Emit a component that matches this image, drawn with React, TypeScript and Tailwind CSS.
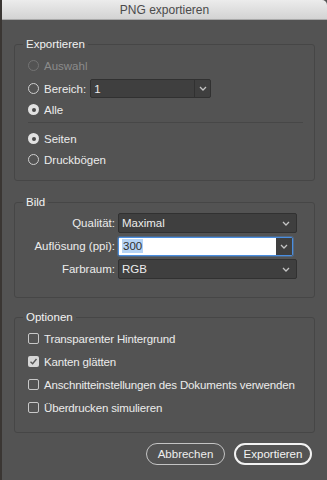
import React from 'react';

const font = "font-['Liberation_Sans',Arial,sans-serif]";

function Chevron() {
  return (
    <svg width="8" height="5" viewBox="0 0 8 5" className="shrink-0">
      <polyline points="1,1 4,4 7,1" fill="none" stroke="#c4c4c4" strokeWidth="1.3" />
    </svg>
  );
}

function Radio({ checked, disabled, label }: { checked?: boolean; disabled?: boolean; label: string }) {
  return (
    <div className="flex items-center h-[21px]">
      {checked ? (
        <span className="w-[11px] h-[11px] rounded-full bg-[#e2e2e2] flex items-center justify-center">
          <span className="w-[4px] h-[4px] rounded-full bg-[#4a4a4a]" />
        </span>
      ) : (
        <span
          className={
            'w-[11px] h-[11px] rounded-full border ' +
            (disabled ? 'border-[#747474]' : 'border-[#cfcfcf]')
          }
        />
      )}
      <span className={'ml-[5px] ' + (disabled ? 'text-[#8b8b8b]' : 'text-[#ececec]')}>{label}</span>
    </div>
  );
}

function Checkbox({ checked, label }: { checked?: boolean; label: string }) {
  return (
    <div className="flex items-center h-[23px] whitespace-nowrap">
      {checked ? (
        <span className="w-[11px] h-[11px] shrink-0 rounded-[2px] bg-[#d6d6d6] flex items-center justify-center">
          <svg width="9" height="9" viewBox="0 0 9 9">
            <polyline points="1.5,4.8 3.6,6.8 7.5,2" fill="none" stroke="#555" strokeWidth="1.4" />
          </svg>
        </span>
      ) : (
        <span className="w-[11px] h-[11px] shrink-0 rounded-[2px] border border-[#c8c8c8]" />
      )}
      <span className="ml-[5px] text-[#ececec] tracking-[-0.15px]">{label}</span>
    </div>
  );
}

function Select({ value }: { value: string }) {
  return (
    <div className="w-[179px] h-[20px] bg-[#3f3f3f] border border-[#313131] rounded-[2px] flex items-center justify-between pl-[3px] pr-[6px] text-[#ececec]">
      <span>{value}</span>
      <Chevron />
    </div>
  );
}

export default function App() {
  return (
    <div className={`w-[327px] h-[480px] bg-[#3a3633] ${font} text-[11.5px] leading-[14px] select-none`}>
      <div className="ml-[2px] h-full bg-[#535353] flex flex-col">
        {/* Title bar */}
        <div className="h-[20px] rounded-tr-[5px] bg-gradient-to-b from-[#ececec] to-[#d3d3d3] border-b border-[#a9a9a9] flex items-center justify-center text-[12px] text-[#4b4b4b]">
          PNG exportieren
        </div>

        <div className="px-3 flex flex-col">
          {/* Exportieren */}
          <fieldset className="mt-[17px] border border-[#464646] rounded-[3px] pb-[10px]">
            <legend className="ml-[8px] px-[3px] text-[#f2f2f2]">Exportieren</legend>
            <div className="px-[13px]">
              <div className="mt-[4px]">
                <Radio disabled label="Auswahl" />
              </div>
              <div className="flex items-center h-[21px] mt-[2px]">
                <span className="w-[11px] h-[11px] rounded-full border border-[#cfcfcf]" />
                <span className="ml-[5px] text-[#ececec]">Bereich:</span>
                <div className="ml-[4px] w-[121px] h-[19px] bg-[#3f3f3f] border border-[#313131] rounded-[2px] flex text-[#ececec]">
                  <span className="flex-1 pl-[3px] flex items-center">1</span>
                  <span className="w-[16px] border-l border-[#313131] flex items-center justify-center">
                    <Chevron />
                  </span>
                </div>
              </div>
              <Radio checked label="Alle" />
              <div className="mt-[2px] h-px bg-[#474747] mr-[-2px]" />
              <div className="mt-[5px]">
                <Radio checked label="Seiten" />
              </div>
              <Radio label="Druckbögen" />
            </div>
          </fieldset>

          {/* Bild */}
          <fieldset className="mt-[14px] border border-[#464646] rounded-[3px] pb-[18px]">
            <legend className="ml-[8px] px-[3px] text-[#f2f2f2]">Bild</legend>
            <div className="mt-[4px] flex flex-col gap-[3px] text-[#ececec]">
              <div className="flex items-center h-[20px]">
                <span className="w-[100px] text-right">Qualität:</span>
                <div className="ml-[3px]">
                  <Select value="Maximal" />
                </div>
              </div>
              <div className="flex items-center h-[20px]">
                <span className="w-[100px] text-right">Auflösung (ppi):</span>
                <div className="ml-[3px] w-[175px] h-[19px] border border-[#4a8ee0] rounded-[2px] flex shadow-[0_0_0_1px_rgba(74,142,224,0.35)]">
                  <span className="flex-1 bg-white flex items-center pl-[3px]">
                    <span className="bg-[#b5d3f5] text-[#2f2f2f] px-px">300</span>
                  </span>
                  <span className="w-[16px] bg-[#3f3f3f] flex items-center justify-center">
                    <Chevron />
                  </span>
                </div>
              </div>
              <div className="flex items-center h-[20px]">
                <span className="w-[100px] text-right">Farbraum:</span>
                <div className="ml-[3px]">
                  <Select value="RGB" />
                </div>
              </div>
            </div>
          </fieldset>

          {/* Optionen */}
          <fieldset className="mt-[12px] border border-[#464646] rounded-[3px] pt-[3px] pb-[13px]">
            <legend className="ml-[8px] px-[3px] text-[#f2f2f2]">Optionen</legend>
            <div className="px-[13px]">
              <Checkbox label="Transparenter Hintergrund" />
              <Checkbox checked label="Kanten glätten" />
              <Checkbox label="Anschnitteinstellungen des Dokuments verwenden" />
              <Checkbox label="Überdrucken simulieren" />
            </div>
          </fieldset>

          {/* Buttons */}
          <div className="mt-[10px] flex justify-end gap-[9px] mr-[3px]">
            <button className="w-[79px] h-[22px] rounded-full border-[1.5px] border-[#c4c4c4] text-[#eeeeee] flex items-center justify-center">
              Abbrechen
            </button>
            <button className="w-[78px] h-[22px] rounded-full border-2 border-[#f2f2f2] text-[#f4f4f4] flex items-center justify-center">
              Exportieren
            </button>
          </div>
        </div>
      </div>
    </div>
  );
}
